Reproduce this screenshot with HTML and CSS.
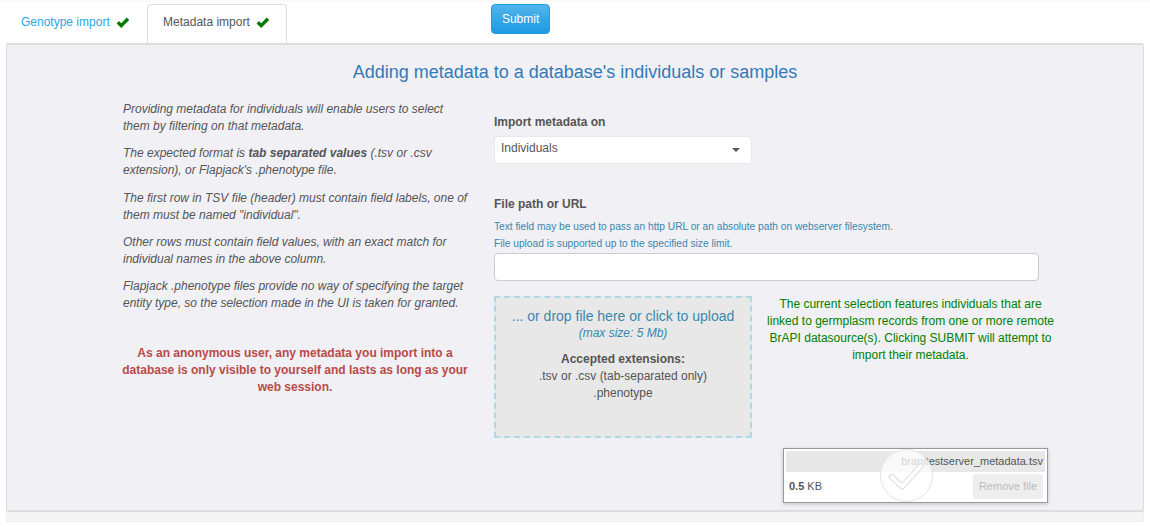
FILE: index.html
```html
<!DOCTYPE html>
<html lang="en">
<head>
<meta charset="utf-8">
<title>Metadata import</title>
<link rel="stylesheet" href="styles.css">
</head>
<body>
<div class="topbar">
  <nav class="tabs">
    <a class="tab">Genotype import <svg class="check" viewBox="0 0 14 12"><path d="M.6 6.4 L3 4 L5.2 6.2 L10.8 .6 L13.2 3 L5.2 11 Z"/></svg></a>
    <a class="tab active">Metadata import <svg class="check" viewBox="0 0 14 12"><path d="M.6 6.4 L3 4 L5.2 6.2 L10.8 .6 L13.2 3 L5.2 11 Z"/></svg></a>
  </nav>
  <button class="submit">Submit</button>
</div>
<main class="panel">
  <h2 class="title">Adding metadata to a database's individuals or samples</h2>
  <div class="columns">
    <section class="intro">
      <p>Providing metadata for individuals will enable users to select them by filtering on that metadata.</p>
      <p>The expected format is <b>tab separated values</b> (.tsv or .csv extension), or Flapjack's .phenotype file.</p>
      <p>The first row in TSV file (header) must contain field labels, one of them must be named "individual".</p>
      <p>Other rows must contain field values, with an exact match for individual names in the above column.</p>
      <p>Flapjack .phenotype files provide no way of specifying the target entity type, so the selection made in the UI is taken for granted.</p>
      <div class="warning">As an anonymous user, any metadata you import into a database is only visible to yourself and lasts as long as your web session.</div>
    </section>
    <section class="form">
      <label class="label">Import metadata on</label>
      <div class="select"><span>Individuals</span><i class="caret"></i></div>
      <label class="label second">File path or URL</label>
      <div class="help first">Text field may be used to pass an http URL or an absolute path on webserver filesystem.</div>
      <div class="help">File upload is supported up to the specified size limit.</div>
      <div class="input"></div>
      <div class="drop-row">
        <div class="dropzone">
          <div class="drop-title">... or drop file here or click to upload</div>
          <div class="drop-size">(max size: 5 Mb)</div>
          <div class="drop-ext"><b>Accepted extensions:</b><br>.tsv or .csv (tab-separated only)<br>.phenotype</div>
        </div>
        <div class="notice">The current selection features individuals that are linked to germplasm records from one or more remote BrAPI datasource(s). Clicking SUBMIT will attempt to import their metadata.</div>
      </div>
    </section>
  </div>
  <div class="preview">
    <div class="filename">brapitestserver_metadata.tsv</div>
    <div class="filerow"><span><b>0.5</b> KB</span><span class="remove">Remove file</span></div>
    <div class="mark"><svg viewBox="0 0 53 53"><path class="tick-edge" d="M11 28 L22 38 L41 17"/><path class="tick-fill" d="M11 28 L22 38 L41 17"/></svg></div>
  </div>
</main>
<div class="footer"></div>
</body>
</html>
```
FILE: styles.css
```css
* { box-sizing: border-box; }
html, body { margin: 0; padding: 0; }
body {
  font-family: "Liberation Sans", Arial, sans-serif;
  font-size: 12px;
  line-height: 1.42857;
  color: #555;
  background: #fff;
  height: 527px;
  overflow: hidden;
}
.topbar {
  height: 43px;
  display: flex;
  align-items: flex-start;
  padding-top: 4px;
  background: linear-gradient(#f8f8f8 0, #fff 3px);
}
.tabs { display: flex; height: 39px; margin-left: 5px; }
.tab {
  display: flex;
  align-items: center;
  gap: 3px;
  padding: 0 16px 2px 15px;
  height: 39px;
  color: #2fa4e7;
  white-space: pre;
  border: 1px solid transparent;
  border-bottom: 0;
  border-radius: 4px 4px 0 0;
}
.tab.active {
  color: #555;
  background: #fff;
  border-color: #ddd;
}
.check { width: 14px; height: 12px; fill: #007a00; }
.submit {
  margin-left: 204px;
  width: 59px;
  height: 30px;
  font: 12px "Liberation Sans", Arial, sans-serif;
  color: #fff;
  background: linear-gradient(#54b4eb, #2fa4e7 60%, #1d9ce5);
  border: 1px solid #1f9ce0;
  border-radius: 4px;
  padding: 0;
}
.panel {
  position: relative;
  height: 469px;
  margin: 0 6px;
  background: #f0f0f5;
  border: 1px solid #ddd;
  border-top-width: 2px;
  border-bottom-width: 2px;
  border-radius: 2px;
}
.title {
  margin: 0;
  padding-top: 17px;
  font-size: 18px;
  font-weight: 400;
  line-height: 20px;
  color: #337ab7;
  text-align: center;
}
.columns { display: flex; padding-left: 116px; margin-top: 19px; }
.intro { width: 348px; font-style: italic; }
.intro p { margin: 0 0 10px; }
.warning {
  margin: 32.1px 3px 0 -1px;
  font-style: normal;
  font-weight: 700;
  color: #b94a48;
  text-align: center;
}
.form { margin-left: 23px; width: 600px; padding-top: 13px; }
.label { display: block; font-weight: 700; line-height: 17px; }
.select {
  display: flex;
  align-items: center;
  justify-content: space-between;
  width: 258px;
  height: 28px;
  margin-top: 5px;
  padding: 0 11px 3px 6px;
  background: #fff;
  border: 1px solid #e8e8e8;
  border-radius: 4px;
}
.caret {
  width: 0;
  height: 0;
  margin-top: 2px;
  border: 4px solid transparent;
  border-top-color: #555;
  border-bottom: 0;
}
.second { margin-top: 32px; }
.help { font-size: 10.2px; line-height: 17px; color: #3a87ad; }
.help.first { margin-top: 5px; }
.input {
  width: 545px;
  height: 28px;
  margin-top: 1px;
  background: #fff;
  border: 1px solid #ccc;
  border-radius: 4px;
}
.drop-row { display: flex; margin-top: 15px; }
.dropzone {
  width: 258px;
  height: 142px;
  padding-top: 10px;
  background: #e8e8e8;
  border: 2px dashed #add8e6;
  text-align: center;
}
.drop-title { font-size: 14px; line-height: 17px; color: #3a87ad; }
.drop-size { font-style: italic; line-height: 17px; color: #3a87ad; }
.drop-ext { margin-top: 8.7px; }
.notice {
  width: 291px;
  margin-left: 13px;
  color: #008000;
  text-align: center;
}
.preview {
  position: absolute;
  left: 776px;
  top: 403px;
  width: 265px;
  height: 55px;
  padding: 2px;
  background: #fff;
  border: 1px solid #999;
  box-shadow: 0 1px 4px rgba(0,0,0,.2);
  font-size: 11px;
}
.filename {
  height: 21px;
  padding-right: 2px;
  background: #e8e8e8;
  text-align: right;
  line-height: 21px;
  color: #555;
}
.filerow {
  display: flex;
  align-items: center;
  justify-content: space-between;
  height: 29px;
  padding: 0 2px 0 3px;
}
.remove {
  padding: 0 6px;
  height: 25px;
  line-height: 25px;
  color: #bbb;
  background: #eee;
  border-radius: 3px;
}
.mark {
  position: absolute;
  left: 96px;
  top: 0;
  width: 53px;
  height: 53px;
  border-radius: 50%;
  background: rgba(255,255,255,.75);
  border: 1px solid #e4e4e4;
}
.mark svg { display: block; width: 100%; height: 100%; }
.mark path { fill: none; stroke-linejoin: round; stroke-linecap: round; }
.tick-edge { stroke: #dcdcdc; stroke-width: 6; }
.tick-fill { stroke: #fff; stroke-width: 4; }
.footer {
  height: 10px;
  margin: 0 6px;
  background: #f5f5f5;
  border: 1px solid #eee;
  border-top: 0;
}
```
